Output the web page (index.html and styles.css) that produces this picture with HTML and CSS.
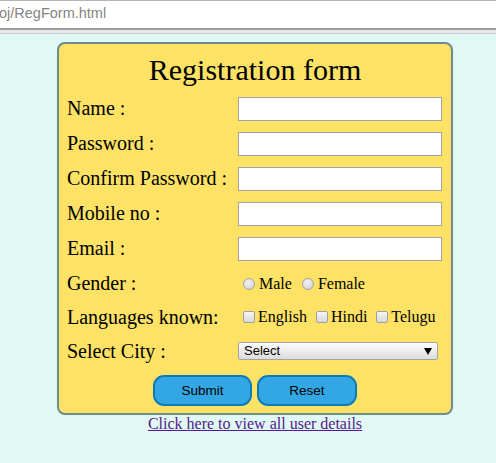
FILE: index.html
```html
<!DOCTYPE html>
<html>
<head>
<meta charset="utf-8">
<title>RegForm</title>
<link rel="stylesheet" href="styles.css">
</head>
<body>
<div class="chrome">
  <div class="url">oj/RegForm.html</div>
  <div class="band"></div>
</div>
<main class="page">
  <form class="box">
    <h1 class="title">Registration form</h1>
    <div class="grid">
      <label class="lbl">Name :</label>
      <div class="cell"><input class="txt" type="text"></div>
      <label class="lbl">Password :</label>
      <div class="cell"><input class="txt" type="password"></div>
      <label class="lbl">Confirm Password :</label>
      <div class="cell"><input class="txt" type="password"></div>
      <label class="lbl">Mobile no :</label>
      <div class="cell"><input class="txt" type="text"></div>
      <label class="lbl">Email :</label>
      <div class="cell"><input class="txt" type="text"></div>
      <label class="lbl">Gender :</label>
      <div class="cell opts">
        <label class="opt"><input class="radio" type="radio" name="g">Male</label>
        <label class="opt"><input class="radio" type="radio" name="g">Female</label>
      </div>
      <label class="lbl">Languages known:</label>
      <div class="cell opts langs">
        <label class="opt"><input class="check" type="checkbox">English</label>
        <label class="opt"><input class="check" type="checkbox">Hindi</label>
        <label class="opt"><input class="check" type="checkbox">Telugu</label>
      </div>
      <label class="lbl">Select City :</label>
      <div class="cell">
        <select class="sel"><option>Select</option></select>
      </div>
    </div>
    <div class="actions">
      <button class="btn" type="button">Submit</button>
      <button class="btn" type="reset">Reset</button>
    </div>
  </form>
  <div class="linkrow"><a class="link" href="#">Click here to view all user details</a></div>
</main>
</body>
</html>
```
FILE: styles.css
```css
html, body {
  margin: 0;
  padding: 0;
}
body {
  background: #e1f9f5;
  font-family: "Liberation Serif", "Times New Roman", serif;
  color: #000;
}
.chrome {
  height: 34px;
  background: #e6e6e6;
}
.url {
  box-sizing: border-box;
  height: 30px;
  background: #fff;
  border-top: 1px solid #b5b5b5;
  border-bottom: 2px solid #9c9c9c;
  font-family: "Liberation Sans", "DejaVu Sans", sans-serif;
  font-size: 14.5px;
  line-height: 24px;
  color: #858585;
  text-indent: -1px;
}
.band {
  height: 3px;
  background: #e8e8e8;
  border-bottom: 1px solid #c9c9c9;
}
.page {
  width: 396px;
  margin-left: 57px;
  padding-top: 8px;
}
.box {
  box-sizing: border-box;
  width: 396px;
  height: 373px;
  background: #fde266;
  border: 2px solid #6f8b8b;
  border-radius: 8px;
  padding: 10px 8px 7px 8px;
  margin: 0;
}
.title {
  margin: 0 0 5px 0;
  font-weight: normal;
  font-size: 30px;
  line-height: 32px;
  text-align: center;
}
.grid {
  display: grid;
  grid-template-columns: 171px 1fr;
  grid-template-rows: repeat(6, 35px) 32px 36px;
}
.lbl {
  font-size: 20px;
  display: flex;
  align-items: center;
  white-space: nowrap;
}
.cell {
  display: flex;
  align-items: center;
}
.txt {
  box-sizing: border-box;
  width: 204px;
  height: 24px;
  margin: 0;
  border: 1px solid #a3a3a3;
  background: #fff;
  padding: 2px 4px;
}
.opts {
  gap: 5px;
  font-size: 16px;
}
.langs {
  gap: 4px;
}
.opt {
  display: inline-flex;
  align-items: center;
  gap: 4px;
  margin-left: 5px;
  white-space: nowrap;
}
.radio {
  -webkit-appearance: none;
  appearance: none;
  width: 12px;
  height: 12px;
  margin: 0;
  border: 1px solid #a6a6a6;
  border-radius: 50%;
  background: radial-gradient(circle at 40% 35%, #f4f4f4 0%, #dedede 55%, #c9c9c9 100%);
}
.check {
  -webkit-appearance: none;
  appearance: none;
  width: 12px;
  height: 12px;
  margin: 0 -1px 0 0;
  border: 1px solid #a0a0a0;
  border-radius: 2px;
  background: linear-gradient(#f6f6f6, #d8d8d8);
}
.sel {
  -webkit-appearance: none;
  appearance: none;
  box-sizing: border-box;
  width: 200px;
  height: 18px;
  margin: 0;
  padding: 0 0 0 5px;
  border: 1px solid #a3a3a3;
  border-radius: 2px;
  font-family: "Liberation Sans", Arial, sans-serif;
  font-size: 13px;
  line-height: 16px;
  color: #000;
  background-color: #eee;
  background-image: url("data:image/svg+xml;utf8,<svg xmlns='http://www.w3.org/2000/svg' width='8' height='7'><path d='M0 0 H8 L4 7 Z' fill='black'/></svg>"), linear-gradient(#fdfdfd, #dcdcdc);
  background-repeat: no-repeat, no-repeat;
  background-position: right 5px center, 0 0;
  background-size: 8px 7px, 100% 100%;
}
.actions {
  margin-top: 6px;
  display: flex;
  justify-content: center;
  gap: 5px;
}
.btn {
  box-sizing: border-box;
  width: 99px;
  height: 31px;
  margin: 0;
  border: 2px solid #0c7bbc;
  border-radius: 11px;
  background: #33a7e3;
  font-family: "Liberation Sans", Arial, sans-serif;
  font-size: 13.5px;
  color: #000;
  padding: 0;
}
.btn + .btn {
  width: 100px;
}
.linkrow {
  text-align: center;
  font-size: 16px;
  line-height: 18px;
}
.link {
  color: #551a8b;
  text-decoration: underline;
}
```
